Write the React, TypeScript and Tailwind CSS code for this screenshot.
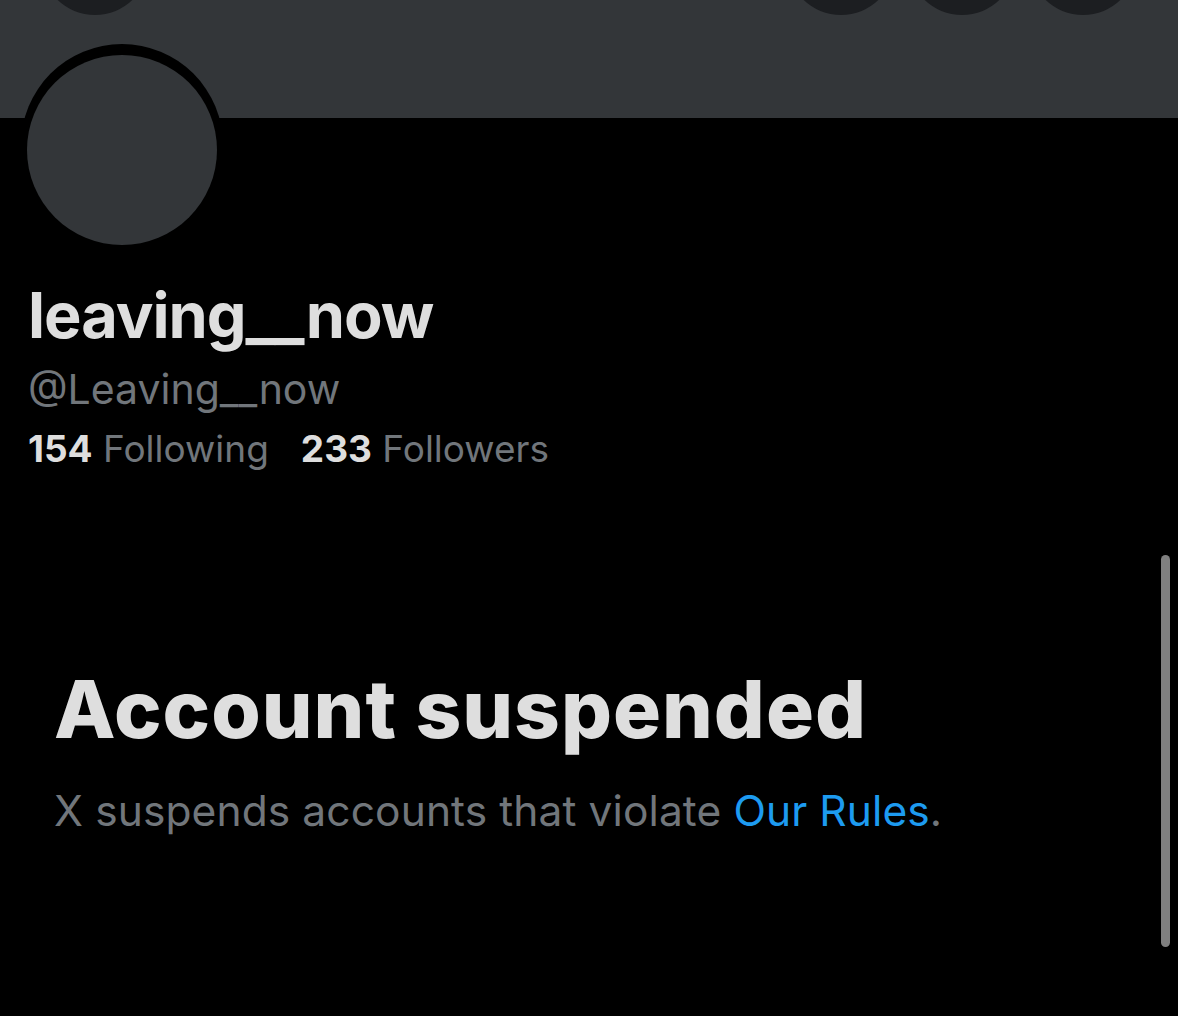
import React from 'react';

// Suspended profile page, dark theme.

const TopButtons: React.FC = () => (
    <div className="absolute top-[-93px] left-[41px] right-[41px] flex items-start">
        <div className="w-[108px] h-[108px] rounded-full bg-[#1c1e21]" />
        <div className="ml-auto flex gap-[13px]">
            <div className="w-[108px] h-[108px] rounded-full bg-[#1c1e21]" />
            <div className="w-[108px] h-[108px] rounded-full bg-[#1c1e21]" />
            <div className="w-[108px] h-[108px] rounded-full bg-[#1c1e21]" />
        </div>
    </div>
);

export default function App() {
    return (
        <div
            className="relative w-[1178px] h-[1016px] overflow-hidden bg-black"
            style={{ fontFamily: 'Inter, "Noto Sans", sans-serif' }}
        >
            {/* Banner */}
            <div className="relative h-[118px] bg-[#333639]">
                <TopButtons />
            </div>

            {/* Avatar */}
            <div className="relative -mt-[74px] ml-[21px] w-[202px] h-[202px] rounded-full bg-black pt-[11px] px-[6px] pb-[1px]">
                <div className="w-[190px] h-[190px] rounded-full bg-[#333639]" />
            </div>

            {/* Profile info */}
            <div className="px-[28px] mt-[33px]">
                <h1 className="text-[63px] leading-[72px] font-bold tracking-[-1px] text-[#dedede]">leaving__now</h1>
                <p className="text-[41px] leading-[48px] text-[#71767b] mt-[14px]">@Leaving__now</p>
                <div className="flex gap-[32px] text-[37px] leading-[44px] mt-[14px]">
                    <span>
                        <span className="font-bold text-[#dedede]">154</span>
                        <span className="text-[#71767b]"> Following</span>
                    </span>
                    <span>
                        <span className="font-bold text-[#dedede]">233</span>
                        <span className="text-[#71767b]"> Followers</span>
                    </span>
                </div>
            </div>

            {/* Suspended notice */}
            <div className="px-[54px] mt-[190px]">
                <h2 className="text-[80px] leading-[96px] font-extrabold tracking-[1px] text-[#dedede]">Account suspended</h2>
                <p className="text-[42.5px] leading-[52px] tracking-[0.1px] text-[#71767b] mt-[28px]">
                    X suspends accounts that violate <span className="text-[#1d9bf0]">Our Rules</span>.
                </p>
            </div>

            {/* Scrollbar */}
            <div className="absolute left-[1161px] top-[555px] w-[9px] h-[392px] rounded-full bg-[#808080]" />
        </div>
    );
}
